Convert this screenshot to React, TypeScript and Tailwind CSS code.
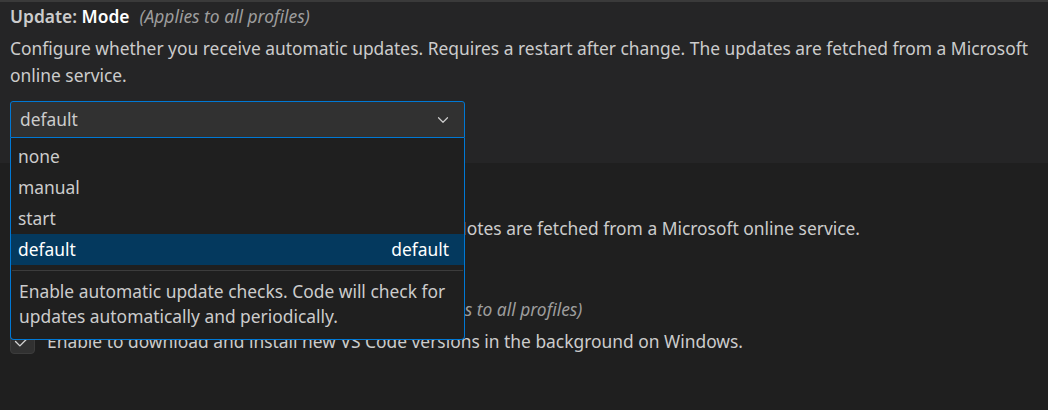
import { ChevronDown, Check } from "lucide-react";

const options = ["none", "manual", "start", "default"];

const App = () => {
  const selected = "default";

  return (
    <div className="relative h-[410px] w-[1048px] overflow-hidden bg-[#1f1f1f] font-['Noto_Sans','Open_Sans',sans-serif] text-[17.4px] text-[#cccccc]">
      {/* focused setting */}
      <div className="h-[163px] border-t-2 border-[#3a3a3a] bg-[#252526] px-[10px]">
        <div className="flex h-[28px] items-center gap-[10px]">
          <span className="font-semibold text-[#cccccc]">
            Update: <span className="text-white">Mode</span>
          </span>
          <span className="italic text-[#9d9d9d]">(Applies to all profiles)</span>
        </div>
        <p className="mt-[5px] w-[1030px] leading-[27px]">
          Configure whether you receive automatic updates. Requires a restart after change. The updates are
          fetched from a Microsoft online service.
        </p>
        <div className="mt-[12px] flex h-[37px] w-[455px] items-center justify-between rounded-t-[3px] border border-[#0078d4] bg-[#313131] pl-[9px] pr-[12px]">
          <span>default</span>
          <ChevronDown size={18} strokeWidth={1.6} className="text-[#cccccc]" />
        </div>
      </div>

      {/* settings behind the dropdown */}
      <div className="px-[10px]">
        <div className="mt-[20px] flex h-[28px] items-center gap-[10px]">
          <span className="font-semibold">
            Update: <span className="text-white">Show Release Notes</span>
          </span>
          <span className="italic text-[#9d9d9d]">(Applies to all profiles)</span>
        </div>
        <div className="mt-[5px] flex h-[24px] items-center gap-[12px]">
          <div className="flex h-[26px] w-[25px] shrink-0 items-center justify-center rounded-[4px] border border-[#3c3c3c] bg-[#313131]">
            <Check size={21} strokeWidth={1.6} className="text-[#d4d4d4]" />
          </div>
          <span className="whitespace-nowrap">
            Show Release Notes after an update. The Release Notes are fetched from a Microsoft online service.
          </span>
        </div>

        <div className="mt-[55px] flex h-[28px] items-center gap-[10px]">
          <span className="font-semibold">
            Update: <span className="text-white">Enable Windows Background Updates</span>
          </span>
          <span className="italic text-[#9d9d9d]">(Applies to all profiles)</span>
        </div>
        <div className="mt-[6px] flex h-[24px] items-center gap-[12px]">
          <div className="flex h-[26px] w-[25px] shrink-0 items-center justify-center rounded-[4px] border border-[#3c3c3c] bg-[#313131]">
            <Check size={21} strokeWidth={1.6} className="text-[#d4d4d4]" />
          </div>
          <span className="whitespace-nowrap">
            Enable to download and install new VS Code versions in the background on Windows.
          </span>
        </div>
      </div>

      {/* open dropdown */}
      <div className="absolute left-[10px] top-[138px] flex h-[202px] w-[455px] flex-col rounded-b-[4px] border border-t-0 border-[#0078d4] bg-[#1f1f1f]">
        <div className="flex flex-col pt-[3px]">
          {options.map((opt) => (
            <div
              key={opt}
              className={
                opt === selected
                  ? "flex h-[31px] items-center justify-between bg-[#04395e] pl-[7px] pr-[15px] text-white"
                  : "flex h-[31px] items-center pl-[7px] text-[#cccccc]"
              }
            >
              <span>{opt}</span>
              {opt === selected && <span>default</span>}
            </div>
          ))}
        </div>
        <div className="mx-[1px] mt-[5px] border-t border-[#3c3c3c]" />
        <p className="px-[8px] pt-[8px] leading-[25px] text-[#cccccc]">
          Enable automatic update checks. Code will check for updates automatically and periodically.
        </p>
      </div>
    </div>
  );
};

export default App;
